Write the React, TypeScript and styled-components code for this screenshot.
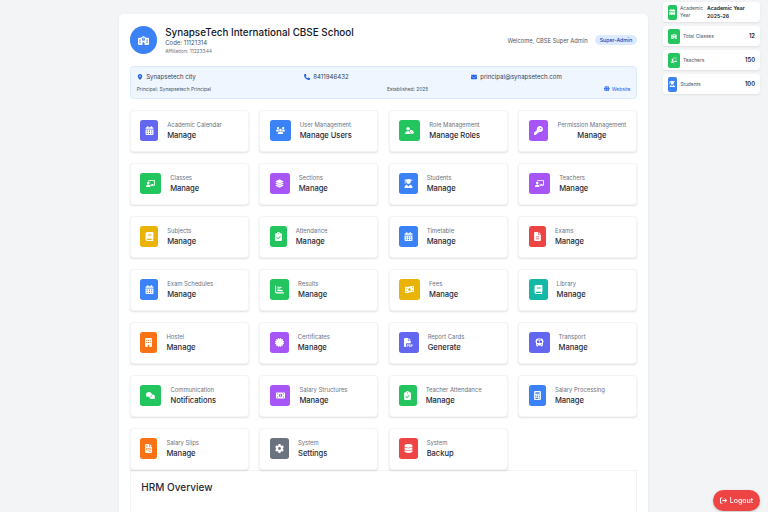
import React from 'react';
import styled, { createGlobalStyle } from 'styled-components';
import {
  FaCalendarDays, FaUsers, FaUserTag, FaKey, FaChalkboardUser, FaLayerGroup, FaUserGraduate, FaBook,
  FaClipboardCheck, FaFileLines, FaChartBar, FaMoneyBillWave, FaBuilding, FaCertificate, FaFilePdf, FaBus,
  FaComments, FaMoneyBill1, FaCalculator, FaFileInvoice, FaGear, FaDatabase, FaSchool, FaLocationDot,
  FaPhone, FaEnvelope, FaGlobe, FaArrowRightFromBracket,
} from 'react-icons/fa6';
import type { IconType } from 'react-icons';

const Global = createGlobalStyle`
  html, body { margin: 0; height: 100%; overflow: hidden; background: #f3f4f6; }
  body { font-family: Inter, "Noto Sans", sans-serif; }
  svg { width: auto; height: 1em; }
`;

const Page = styled.div`
  display: flex;
  align-items: flex-start;
  height: 512px;
  overflow: hidden;
  padding: 2px 8px 0 119px;
  box-sizing: border-box;
  gap: 15px;
`;
const Main = styled.main`
  width: 529px;
  flex: none;
  margin-top: 12px;
  background: #fff;
  border-radius: 5px 5px 0 0;
  padding: 11px 10.67px 10.67px;
  box-sizing: border-box;
  box-shadow: 0 1px 3px rgba(0,0,0,.06);
`;
const Header = styled.header`
  display: flex;
  align-items: center;
  justify-content: space-between;
  height: 30px;
  margin-bottom: 10.67px;
`;
const Brand = styled.div`display: flex; align-items: center; gap: 8px;`;
const Logo = styled.div`
  width: 27.5px; height: 27.5px; border-radius: 50%; background: #3b82f6; color: #fff;
  display: flex; align-items: center; justify-content: center; font-size: 11px;
`;
const BrandText = styled.div`display: flex; flex-direction: column;`;
const Title = styled.h1`margin: 0; font-size: 9.9px; line-height: 14px; font-weight: 500; color: #111827;`;
const Code = styled.div`font-size: 6px; line-height: 8.5px; color: #4b5563;`;
const Affil = styled.div`font-size: 4.9px; line-height: 7.5px; color: #6b7280;`;
const UserBox = styled.div`display: flex; align-items: center; gap: 7px;`;
const Welcome = styled.span`font-size: 5.75px; color: #4b5563;`;
const Badge = styled.span`
  font-size: 5.2px; line-height: 10px; height: 10px; padding: 0 5px; border-radius: 5px;
  background: #dbeafe; color: #1e40af; font-weight: 500;
`;
const Info = styled.section`
  background: #eff6ff; border: 1px solid #dbeafe; border-radius: 3.5px;
  padding: 4.5px 6px 5px; box-sizing: border-box; height: 33.5px; margin-bottom: 10.67px;
`;
const InfoTop = styled.div`
  display: grid; grid-template-columns: repeat(3, 167px); font-size: 6.1px; line-height: 11px; color: #374151; margin-bottom: 2.5px;
`;
const InfoItem = styled.div`display: flex; align-items: center; gap: 3.5px; svg { color: #2563eb; font-size: 6px; }`;
const InfoBottom = styled.div`
  display: flex; justify-content: space-between; font-size: 4.9px; line-height: 8px; color: #4b5563;
`;
const WebLink = styled.span`display: flex; align-items: center; gap: 2px; color: #2563eb; svg { font-size: 5.5px; }`;
const Grid = styled.div`display: grid; grid-template-columns: repeat(4, 1fr); gap: 10.67px;`;
const Card = styled.div`
  height: 42.3px; box-sizing: border-box; background: #fff; border: 1px solid #f3f4f6; border-radius: 3.5px;
  box-shadow: 0 1px 2px rgba(0,0,0,.12); padding: 0 9.5px; display: flex; align-items: center; gap: 9px;
`;
const Tile = styled.div<{ $bg: string; $w: number }>`
  width: ${p => p.$w}px; height: 21px; flex: none; border-radius: 2.7px; background: ${p => p.$bg}; color: #fff;
  display: flex; align-items: center; justify-content: center; font-size: 9px;
`;
const CardText = styled.div<{ $center?: boolean }>`
  display: flex; flex-direction: column; align-items: ${p => (p.$center ? 'center' : 'flex-start')};
`;
const Label = styled.div`font-size: 5.9px; line-height: 9px; padding-top: 1px; color: #6b7280; white-space: nowrap;`;
const Value = styled.div`font-size: 7.6px; letter-spacing: -0.04px; line-height: 12px; margin-top: 1px; font-weight: 500; color: #1f2937; white-space: nowrap;`;
const Overview = styled.section`
  margin-top: 0; height: 60px; padding: 9px 10.67px; border: 1px solid #f3f4f6; border-bottom: 0;
`;
const OverviewTitle = styled.h2`margin: 0; font-size: 10px; line-height: 14px; font-weight: 500; color: #1f2937;`;
const Side = styled.aside`width: 97px; flex: none; display: flex; flex-direction: column; gap: 4px;`;
const Stat = styled.div`
  height: 20px; box-sizing: border-box; background: #fff; border-radius: 3.5px; box-shadow: 0 1px 2px rgba(0,0,0,.08);
  padding: 0 5px; display: flex; align-items: center; gap: 3.5px;
`;
const StatTile = styled.div<{ $bg: string; $w: number }>`
  width: ${p => p.$w}px; height: 15px; flex: none; border-radius: 2px; background: ${p => p.$bg}; color: #fff;
  display: flex; align-items: center; justify-content: center; font-size: 6.5px;
`;
const StatLabel = styled.div`flex: 1; font-size: 4.9px; line-height: 7px; color: #4b5563;`;
const StatValue = styled.div`font-size: 5.8px; line-height: 8px; font-weight: 600; color: #111827;`;
const StatWide = styled(StatValue)`font-size: 5.2px; width: 48px;`;
const Logout = styled.button`
  position: fixed; right: 8px; bottom: 1.5px; width: 47px; height: 20.5px; border: 0; border-radius: 10.5px;
  background: #ef4444; color: #fff; font: 500 7px Inter, sans-serif; display: flex; align-items: center;
  justify-content: center; gap: 3px; padding: 0; box-shadow: 0 1px 3px rgba(0,0,0,.2);
`;

type Item = { l: string; v: string; i: IconType; c: string; w: number; center?: boolean };
const indigo = '#6366f1', blue = '#3b82f6', green = '#22c55e', purple = '#a855f7', yellow = '#eab308', red = '#ef4444', orange = '#f97316', teal = '#14b8a6', gray = '#6b7280';
const items: Item[] = [
  { l: 'Academic Calendar', v: 'Manage', i: FaCalendarDays, c: indigo, w: 18 },
  { l: 'User Management', v: 'Manage Users', i: FaUsers, c: blue, w: 21 },
  { l: 'Role Management', v: 'Manage Roles', i: FaUserTag, c: green, w: 21 },
  { l: 'Permission Management', v: 'Manage', i: FaKey, c: purple, w: 19.5, center: true },
  { l: 'Classes', v: 'Manage', i: FaChalkboardUser, c: green, w: 21 },
  { l: 'Sections', v: 'Manage', i: FaLayerGroup, c: purple, w: 20 },
  { l: 'Students', v: 'Manage', i: FaUserGraduate, c: blue, w: 18.3 },
  { l: 'Teachers', v: 'Manage', i: FaChalkboardUser, c: purple, w: 21.3 },
  { l: 'Subjects', v: 'Manage', i: FaBook, c: yellow, w: 18 },
  { l: 'Attendance', v: 'Manage', i: FaClipboardCheck, c: green, w: 17 },
  { l: 'Timetable', v: 'Manage', i: FaCalendarDays, c: blue, w: 18.3 },
  { l: 'Exams', v: 'Manage', i: FaFileLines, c: red, w: 17 },
  { l: 'Exam Schedules', v: 'Manage', i: FaCalendarDays, c: blue, w: 18 },
  { l: 'Results', v: 'Manage', i: FaChartBar, c: green, w: 19.3 },
  { l: 'Fees', v: 'Manage', i: FaMoneyBillWave, c: yellow, w: 20.7 },
  { l: 'Library', v: 'Manage', i: FaBook, c: teal, w: 18.7 },
  { l: 'Hostel', v: 'Manage', i: FaBuilding, c: orange, w: 17.3 },
  { l: 'Certificates', v: 'Manage', i: FaCertificate, c: purple, w: 19 },
  { l: 'Report Cards', v: 'Generate', i: FaFilePdf, c: indigo, w: 19.3 },
  { l: 'Transport', v: 'Manage', i: FaBus, c: indigo, w: 20.7 },
  { l: 'Communication', v: 'Notifications', i: FaComments, c: green, w: 21.3 },
  { l: 'Salary Structures', v: 'Manage', i: FaMoneyBill1, c: purple, w: 20.7 },
  { l: 'Teacher Attendance', v: 'Manage', i: FaClipboardCheck, c: green, w: 17.3 },
  { l: 'Salary Processing', v: 'Manage', i: FaCalculator, c: blue, w: 17 },
  { l: 'Salary Slips', v: 'Manage', i: FaFileInvoice, c: orange, w: 17.3 },
  { l: 'System', v: 'Settings', i: FaGear, c: gray, w: 19.3 },
  { l: 'System', v: 'Backup', i: FaDatabase, c: red, w: 18.3 },
];

export default function App() {
  return (
    <>
      <Global />
      <Page>
        <Main>
          <Header>
            <Brand>
              <Logo><FaSchool /></Logo>
              <BrandText>
                <Title>SynapseTech International CBSE School</Title>
                <Code>Code: 11121314</Code>
                <Affil>Affiliation: 11223344</Affil>
              </BrandText>
            </Brand>
            <UserBox>
              <Welcome>Welcome, CBSE Super Admin</Welcome>
              <Badge>Super-Admin</Badge>
            </UserBox>
          </Header>
          <Info>
            <InfoTop>
              <InfoItem><FaLocationDot />Synapsetech city</InfoItem>
              <InfoItem><FaPhone />8411946432</InfoItem>
              <InfoItem><FaEnvelope />principal@synapsetech.com</InfoItem>
            </InfoTop>
            <InfoBottom>
              <span>Principal: Synapsetech Principal</span>
              <span>Established: 2025</span>
              <WebLink><FaGlobe />Website</WebLink>
            </InfoBottom>
          </Info>
          <Grid>
            {items.map(({ l, v, i: Icon, c, w, center }) => (
              <Card key={l + v}>
                <Tile $bg={c} $w={w}><Icon /></Tile>
                <CardText $center={center}>
                  <Label>{l}</Label>
                  <Value>{v}</Value>
                </CardText>
              </Card>
            ))}
          </Grid>
          <Overview>
            <OverviewTitle>HRM Overview</OverviewTitle>
          </Overview>
        </Main>
        <Side>
          <Stat>
            <StatTile $bg={green} $w={8.5}><FaCalendarDays /></StatTile>
            <StatLabel>Academic Year</StatLabel>
            <StatWide>Academic Year 2025-26</StatWide>
          </Stat>
          <Stat>
            <StatTile $bg={green} $w={11.5}><FaSchool /></StatTile>
            <StatLabel>Total Classes</StatLabel>
            <StatValue>12</StatValue>
          </Stat>
          <Stat>
            <StatTile $bg={green} $w={11.5}><FaChalkboardUser /></StatTile>
            <StatLabel>Teachers</StatLabel>
            <StatValue>150</StatValue>
          </Stat>
          <Stat>
            <StatTile $bg={blue} $w={8.7}><FaUserGraduate /></StatTile>
            <StatLabel>Students</StatLabel>
            <StatValue>100</StatValue>
          </Stat>
        </Side>
        <Logout><FaArrowRightFromBracket />Logout</Logout>
      </Page>
    </>
  );
}
